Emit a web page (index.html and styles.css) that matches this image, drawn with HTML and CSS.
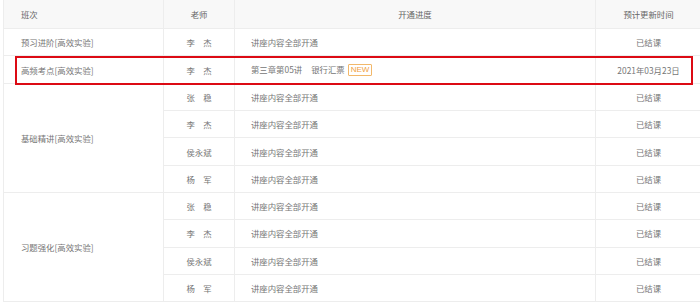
FILE: index.html
```html
<!DOCTYPE html>
<html lang="zh-CN">
<head>
    <meta charset="UTF-8">
    <meta name="viewport" content="width=device-width, initial-scale=1.0">
    <title>课程开通进度</title>
    <link rel="stylesheet" href="styles.css">
</head>
<body>
    <div class="schedule-wrap">
        <table class="schedule">
            <colgroup>
                <col class="col-class">
                <col class="col-teacher">
                <col class="col-progress">
                <col class="col-update">
            </colgroup>
            <thead>
                <tr>
                    <th class="class-name">班次</th>
                    <th>老师</th>
                    <th>开通进度</th>
                    <th>预计更新时间</th>
                </tr>
            </thead>
            <tbody>
                <tr>
                    <td class="class-name">预习进阶[高效实验]</td>
                    <td class="teacher">李　杰</td>
                    <td class="progress">讲座内容全部开通</td>
                    <td class="update">已结课</td>
                </tr>
                <tr>
                    <td class="class-name">高频考点[高效实验]</td>
                    <td class="teacher">李　杰</td>
                    <td class="progress">第三章第05讲<span class="lesson">银行汇票</span><span class="badge-new">NEW</span></td>
                    <td class="update">2021年03月23日</td>
                </tr>

                <tr>
                    <td class="class-name" rowspan="4">基础精讲[高效实验]</td>
                    <td class="teacher">张　稳</td>
                    <td class="progress">讲座内容全部开通</td>
                    <td class="update">已结课</td>
                </tr>
                <tr>
                    <td class="teacher">李　杰</td>
                    <td class="progress">讲座内容全部开通</td>
                    <td class="update">已结课</td>
                </tr>
                <tr>
                    <td class="teacher">侯永斌</td>
                    <td class="progress">讲座内容全部开通</td>
                    <td class="update">已结课</td>
                </tr>
                <tr>
                    <td class="teacher">杨　军</td>
                    <td class="progress">讲座内容全部开通</td>
                    <td class="update">已结课</td>
                </tr>

                <tr>
                    <td class="class-name" rowspan="4">习题强化[高效实验]</td>
                    <td class="teacher">张　稳</td>
                    <td class="progress">讲座内容全部开通</td>
                    <td class="update">已结课</td>
                </tr>
                <tr>
                    <td class="teacher">李　杰</td>
                    <td class="progress">讲座内容全部开通</td>
                    <td class="update">已结课</td>
                </tr>
                <tr>
                    <td class="teacher">侯永斌</td>
                    <td class="progress">讲座内容全部开通</td>
                    <td class="update">已结课</td>
                </tr>
                <tr>
                    <td class="teacher">杨　军</td>
                    <td class="progress">讲座内容全部开通</td>
                    <td class="update">已结课</td>
                </tr>
            </tbody>
        </table>

        <!-- 标注框：高频考点 -->
        <div class="highlight"></div>
    </div>
</body>
</html>
```

FILE: styles.css
```css
* {
    margin: 0;
    padding: 0;
    box-sizing: border-box;
}

body {
    font-family: "Noto Sans CJK SC", "Noto Sans", sans-serif;
    background-color: #fff;
    color: #767676;
    overflow: hidden;
}

.schedule-wrap {
    position: relative;
    padding-left: 3px;
}

.schedule {
    width: 698px;
    border-collapse: collapse;
    table-layout: fixed;
    font-size: 8.4px;
}

.col-class { width: 160px; }
.col-teacher { width: 71px; }
.col-progress { width: 361px; }
.col-update { width: 106px; }

.schedule th,
.schedule td {
    border: 1px solid #ededed;
    text-align: center;
    vertical-align: middle;
    white-space: nowrap;
    font-weight: normal;
}

.schedule th {
    height: 28.7px;
    background-color: #f8f8f8;
    color: #666;
    border-top: none;
}

.schedule td {
    height: 27.3px;
}

.schedule .class-name {
    text-align: left;
    padding-left: 17px;
}

.schedule .progress {
    text-align: left;
    padding-left: 16px;
}

.lesson {
    margin-left: 9px;
}

.badge-new {
    display: inline-block;
    margin-left: 3px;
    padding: 0 2px;
    border: 1px solid #f2b86a;
    border-radius: 1px;
    color: #f0a040;
    font-family: "Liberation Sans", Arial, sans-serif;
    font-size: 8px;
    line-height: 10px;
    vertical-align: middle;
}

.highlight {
    position: absolute;
    left: 15px;
    top: 56px;
    width: 678px;
    height: 29px;
    border: 2px solid #dc0a14;
    pointer-events: none;
}
```
